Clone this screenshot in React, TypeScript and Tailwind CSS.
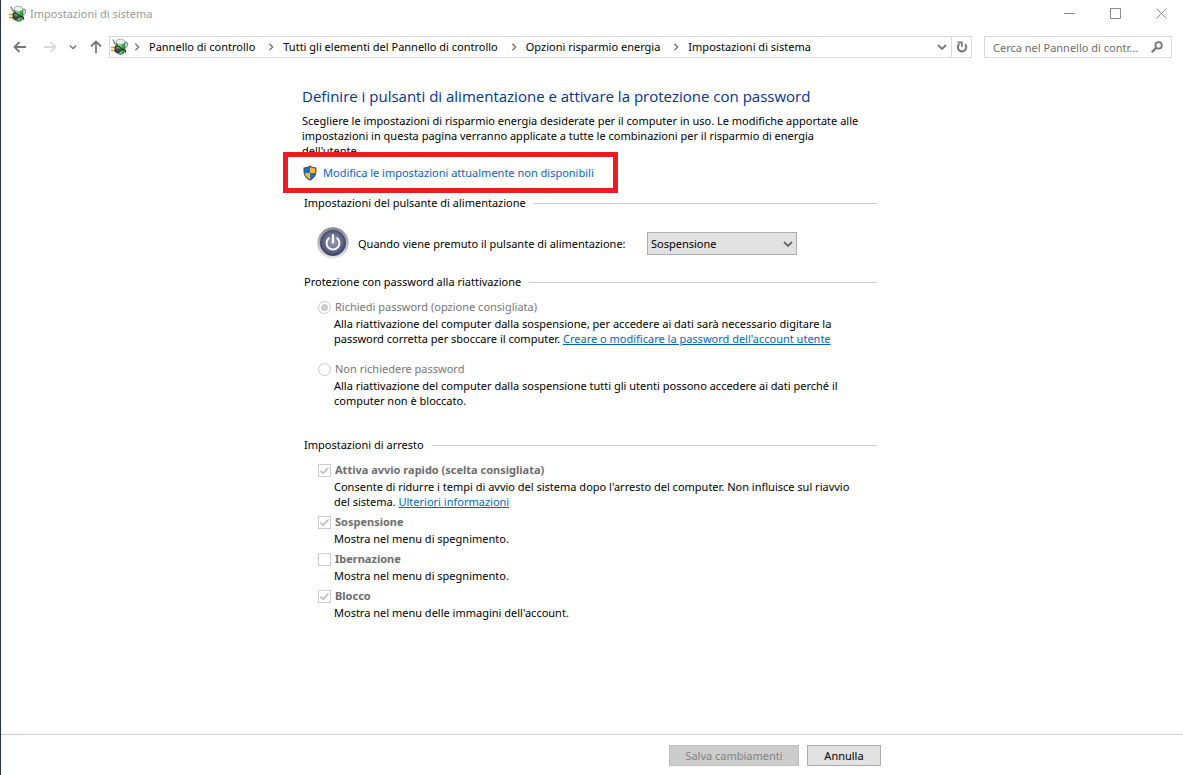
import type { ReactNode } from 'react';

const CRUMBS = [
  'Pannello di controllo',
  'Tutti gli elementi del Pannello di controllo',
  'Opzioni risparmio energia',
  'Impostazioni di sistema',
];

function PowerPlanIcon() {
  return (
    <svg width="18" height="18" viewBox="0 0 18 18" className="shrink-0" aria-hidden>
      <path d="M2 1.5 L3.6 5.5 L6 7.5" stroke="#777" strokeWidth="1.2" fill="none" />
      <path d="M13.6 4.2 Q17 3.8 16.4 7 Q16 9.4 14 10" stroke="#888" strokeWidth="1.3" fill="none" />
      <path d="M5 5 Q4.6 10 6 15 Q9.5 18 13 15 Q14.6 10 14 5 Z" fill="#25a83c" stroke="#3b6b43" strokeWidth=".7" />
      <path d="M7 5.6 H10.6 Q11.4 10 10.6 15.6 L8.4 15.6 Z" fill="#6fe07c" />
      <path d="M5.2 4 Q5.2 1.2 9.5 1.2 Q13.8 1.2 13.8 4 Q13.8 6.4 9.5 6.4 Q5.2 6.4 5.2 4 Z" fill="#e9f0ee" stroke="#8a9895" strokeWidth=".8" />
      <path d="M0 9.6 H4.5 M0 12.6 H4.5" stroke="#dc9a13" strokeWidth="1.5" />
      <path d="M4 8.6 Q6.4 7.4 9 8.8 L11.6 11.2 L9 13.8 Q6.4 15 4 13.8 Z" fill="#4a4d50" stroke="#1d2022" strokeWidth=".8" />
      <path d="M5.2 10 Q6.8 9.2 8.4 10.2" stroke="#b4b8ba" strokeWidth="1" fill="none" />
      <path d="M11 11.4 Q15 11 14.6 14.6" stroke="#222" strokeWidth="1.2" fill="none" />
    </svg>
  );
}

function ArrowIcon({ className }: { className: string }) {
  return (
    <svg width="14" height="14" viewBox="0 0 14 14" className={className} aria-hidden>
      <path d="M13 7 H2 M6.5 2 L1.5 7 L6.5 12" fill="none" stroke="currentColor" strokeWidth="1.8" />
    </svg>
  );
}

function ChevronIcon({ className }: { className: string }) {
  return (
    <svg width="10" height="10" viewBox="0 0 10 10" className={className} aria-hidden>
      <path d="M1 3 L5 7 L9 3" fill="none" stroke="currentColor" strokeWidth="1.8" />
    </svg>
  );
}

function ShieldIcon() {
  return (
    <svg width="16" height="16" viewBox="0 0 16 16" className="shrink-0" aria-hidden>
      <path d="M8 .5 Q5.5 2.4 1.5 2.5 V7 Q2 12.5 8 15.7 Q14 12.5 14.5 7 V2.5 Q10.5 2.4 8 .5 Z" fill="#454b52" />
      <path d="M8 1.9 Q5.5 3.3 2.6 3.5 V8 H8 Z" fill="#1672c9" />
      <path d="M8 1.9 Q10.5 3.3 13.4 3.5 V8 H8 Z" fill="#fdb92c" />
      <path d="M2.7 8 H8 V14.4 Q3.4 12 2.7 8 Z" fill="#fdb92c" />
      <path d="M13.3 8 H8 V14.4 Q12.6 12 13.3 8 Z" fill="#1672c9" />
    </svg>
  );
}

function PowerButtonIcon() {
  return (
    <svg width="32" height="32" viewBox="0 0 32 32" className="shrink-0" aria-hidden>
      <defs>
        <linearGradient id="rim" x1="0" y1="0" x2="0" y2="1">
          <stop offset="0" stopColor="#85888c" />
          <stop offset="0.5" stopColor="#b4b6ba" />
          <stop offset="1" stopColor="#e6e7e9" />
        </linearGradient>
        <radialGradient id="face" cx="0.5" cy="0.45" r="0.55">
          <stop offset="0" stopColor="#9da2bd" />
          <stop offset="0.6" stopColor="#686c91" />
          <stop offset="1" stopColor="#3d4063" />
        </radialGradient>
      </defs>
      <circle cx="16" cy="16" r="15.7" fill="url(#rim)" />
      <circle cx="16" cy="16" r="12.6" fill="url(#face)" stroke="#3d3f5b" strokeWidth=".8" />
      <path d="M11.8 11.2 A6.4 6.4 0 1 0 20.2 11.2" fill="none" stroke="#f4f4f8" strokeWidth="2" strokeLinecap="round" />
      <path d="M16 8 V15.5" stroke="#fff" strokeWidth="2.2" strokeLinecap="round" />
    </svg>
  );
}

function SectionTitle({ children }: { children: ReactNode }) {
  return (
    <div className="flex items-center gap-2 pl-0.5">
      <h2 className="leading-4">{children}</h2>
      <span className="h-px flex-1 bg-[#cccccc]" />
    </div>
  );
}

function RadioOption({ id, label, checked, children }: { id: string; label: string; checked?: boolean; children: ReactNode }) {
  return (
    <div className="pl-4">
      <div className="flex items-center gap-1">
        <input
          type="radio"
          id={id}
          name="password"
          defaultChecked={checked}
          disabled
          className="size-[13px] shrink-0 appearance-none rounded-full border border-[#cccccc] bg-white bg-clip-content p-0.5 checked:bg-[#cccccc]"
        />
        <label htmlFor={id} className="leading-4 text-[#767676]">{label}</label>
      </div>
      <p className="mt-px pl-4">{children}</p>
    </div>
  );
}

function CheckOption({ id, label, checked, children }: { id: string; label: string; checked?: boolean; children: ReactNode }) {
  return (
    <div className="pl-4">
      <div className="flex items-center gap-1">
        <span className="relative flex">
          <input
            type="checkbox"
            id={id}
            defaultChecked={checked}
            disabled
            className="peer size-[13px] shrink-0 appearance-none border border-[#cccccc] bg-white"
          />
          <svg viewBox="0 0 13 13" className="absolute inset-0 hidden size-[13px] peer-checked:block" aria-hidden>
            <path d="M2.5 6.5 L5 9.2 L10.5 3.5" fill="none" stroke="#b4b4b4" strokeWidth="1.3" />
          </svg>
        </span>
        <label htmlFor={id} className="leading-4 font-bold text-[#6d6d6d]">{label}</label>
      </div>
      <p className="mt-px pl-4">{children}</p>
    </div>
  );
}

export default function App() {
  return (
    <div className="flex min-h-screen flex-col border-l border-[#26344d] bg-white font-['Noto_Sans','Open_Sans',sans-serif] text-[11px] leading-[15px] text-black">
      <header className="flex h-[27px] items-center pr-4 pl-2">
        <PowerPlanIcon />
        <span className="ml-[3px] flex-1 text-[#999999]">Impostazioni di sistema</span>
        <div className="flex gap-[35px] text-[#8a8a8a]">
          <button type="button" aria-label="Riduci a icona">
            <svg width="11" height="11" viewBox="0 0 11 11">
              <path d="M0 5.5 H11" stroke="currentColor" />
            </svg>
          </button>
          <button type="button" aria-label="Ingrandisci">
            <svg width="11" height="11" viewBox="0 0 11 11">
              <path d="M.5 .5 H10.5 V10.5 H.5 Z" fill="none" stroke="currentColor" />
            </svg>
          </button>
          <button type="button" aria-label="Chiudi">
            <svg width="11" height="11" viewBox="0 0 11 11">
              <path d="M.5 .5 L10.5 10.5 M10.5 .5 L.5 10.5" stroke="currentColor" />
            </svg>
          </button>
        </div>
      </header>

      <div className="flex items-center pt-[9px] pr-[11px] pl-3">
        <button type="button" aria-label="Indietro" className="text-[#777777]">
          <ArrowIcon className="" />
        </button>
        <button type="button" aria-label="Avanti" disabled className="ml-4 text-[#d9d9d9]">
          <ArrowIcon className="rotate-180" />
        </button>
        <button type="button" aria-label="Percorsi recenti" className="ml-3 text-[#777777]">
          <ChevronIcon className="size-2" />
        </button>
        <button type="button" aria-label="Livello superiore" className="ml-3 text-[#777777]">
          <ArrowIcon className="rotate-90" />
        </button>

        <nav className="ml-[6px] flex h-[22px] min-w-0 flex-1 items-center border border-[#d9d9d9] pl-px">
          <PowerPlanIcon />
          <ol className="flex flex-1 whitespace-nowrap">
            {CRUMBS.map((crumb) => (
              <li key={crumb} className="ml-3 flex items-center gap-2 first:ml-1">
                <ChevronIcon className="size-2 -rotate-90 text-[#777777]" />
                <a href="#" className="leading-4">{crumb}</a>
              </li>
            ))}
          </ol>
          <button type="button" aria-label="Posizioni precedenti" className="px-1 text-[#777777]">
            <ChevronIcon className="" />
          </button>
          <button type="button" aria-label="Aggiorna" className="flex h-full w-5 items-center justify-center border-l border-[#d9d9d9] text-[#777777]">
            <svg width="12" height="12" viewBox="0 0 12 12" aria-hidden>
              <path d="M9 3.2 A4.2 4.2 0 1 1 3.4 3" fill="none" stroke="currentColor" strokeWidth="2" />
              <path d="M1.5 1.4 H5.8 V5.8" fill="none" stroke="currentColor" strokeWidth="1.8" />
            </svg>
          </button>
        </nav>

        <form className="ml-3 flex h-[22px] w-[188px] items-center border border-[#d9d9d9] pr-2 pl-2">
          <input
            type="search"
            aria-label="Cerca"
            placeholder="Cerca nel Pannello di contr..."
            className="min-w-0 flex-1 outline-none placeholder:text-[#6d6d6d]"
          />
          <svg width="12" height="12" viewBox="0 0 12 12" className="text-[#777777]" aria-hidden>
            <circle cx="7.6" cy="4.4" r="3.2" fill="none" stroke="currentColor" strokeWidth="1.8" />
            <path d="M5.2 6.8 L.8 11.2" stroke="currentColor" strokeWidth="2.2" />
          </svg>
        </form>
      </div>

      <main className="mx-auto w-full max-w-[580px] flex-1 pt-7 pr-[5px]">
        <h1 className="font-['Open_Sans','Noto_Sans',sans-serif] text-[15px] leading-5 text-[#003399]">
          Definire i pulsanti di alimentazione e attivare la protezione con password
        </h1>
        <p className="mt-[7px] whitespace-nowrap">
          Scegliere le impostazioni di risparmio energia desiderate per il computer in uso. Le modifiche apportate alle
          <br />
          impostazioni in questa pagina verranno applicate a tutte le combinazioni per il risparmio di energia
          <br />
          dell'utente.
        </p>

        <div className="relative mt-[7px] h-4 w-[297px]">
          <div className="absolute -inset-x-[19px] -top-[13px] -bottom-3 flex items-center gap-[5px] border-5 border-[#ed1c24] bg-white pl-[14px]">
            <ShieldIcon />
            <a href="#" className="whitespace-nowrap text-[#0066cc]">Modifica le impostazioni attualmente non disponibili</a>
          </div>
        </div>

        <section className="mt-[14px]">
          <SectionTitle>Impostazioni del pulsante di alimentazione</SectionTitle>
          <div className="mt-4 flex items-center pl-[15px]">
            <PowerButtonIcon />
            <label htmlFor="power-button" className="ml-[9px] w-[289px] whitespace-nowrap">
              Quando viene premuto il pulsante di alimentazione:
            </label>
            <div className="relative">
              <select
                id="power-button"
                className="block h-[23px] w-[150px] appearance-none border border-[#adadad] bg-[#e1e1e1] pl-[3px]"
              >
                <option>Sospensione</option>
              </select>
              <ChevronIcon className="pointer-events-none absolute top-[7px] right-1 text-[#666666]" />
            </div>
          </div>
        </section>

        <section className="mt-[15px]">
          <SectionTitle>Protezione con password alla riattivazione</SectionTitle>
          <div className="mt-[9px] flex flex-col gap-[15px] whitespace-nowrap">
            <RadioOption id="ask" label="Richiedi password (opzione consigliata)" checked>
              Alla riattivazione del computer dalla sospensione, per accedere ai dati sarà necessario digitare la
              <br />
              password corretta per sboccare il computer.{' '}
              <a href="#" className="text-[#0066cc] underline">Creare o modificare la password dell'account utente</a>
            </RadioOption>
            <RadioOption id="no-ask" label="Non richiedere password">
              Alla riattivazione del computer dalla sospensione tutti gli utenti possono accedere ai dati perché il
              <br />
              computer non è bloccato.
            </RadioOption>
          </div>
        </section>

        <section className="mt-[29px]">
          <SectionTitle>Impostazioni di arresto</SectionTitle>
          <div className="mt-[9px] flex flex-col gap-[5px] whitespace-nowrap">
            <CheckOption id="fast" label="Attiva avvio rapido (scelta consigliata)" checked>
              Consente di ridurre i tempi di avvio del sistema dopo l'arresto del computer. Non influisce sul riavvio
              <br />
              del sistema. <a href="#" className="text-[#0066cc] underline">Ulteriori informazioni</a>
            </CheckOption>
            <CheckOption id="sleep" label="Sospensione" checked>Mostra nel menu di spegnimento.</CheckOption>
            <CheckOption id="hibernate" label="Ibernazione">Mostra nel menu di spegnimento.</CheckOption>
            <CheckOption id="lock" label="Blocco" checked>Mostra nel menu delle immagini dell'account.</CheckOption>
          </div>
        </section>
      </main>

      <footer className="border-t border-[#cccccc] pt-[10px] pb-[9px]">
        <div className="mx-auto flex w-full max-w-[580px] justify-end gap-2 pr-px">
          <button type="button" disabled className="h-[21px] w-[130px] border border-[#bfbfbf] bg-[#cccccc] text-[#838383]">
            Salva cambiamenti
          </button>
          <button type="button" className="h-[21px] w-[74px] border border-[#adadad] bg-[#e1e1e1]">
            Annulla
          </button>
        </div>
      </footer>
    </div>
  );
}
